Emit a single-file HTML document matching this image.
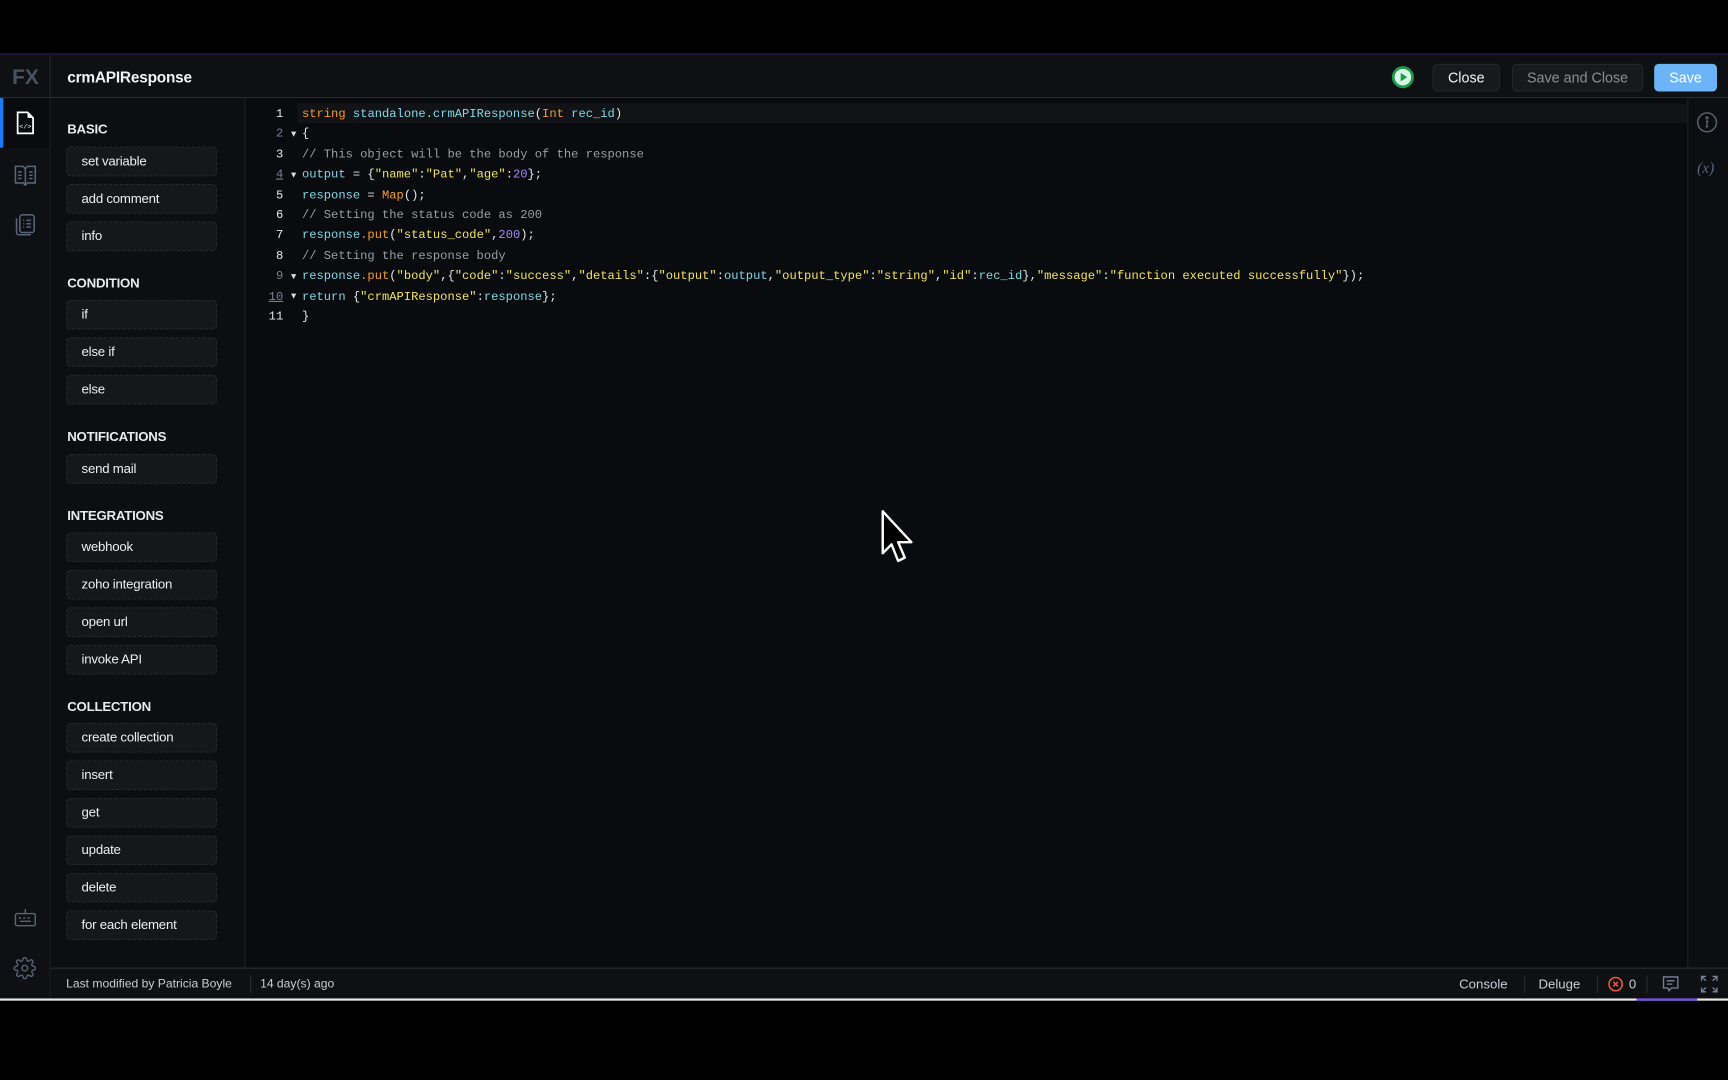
<!DOCTYPE html>
<html><head><meta charset="utf-8"><style>
html,body{margin:0;padding:0;background:#000;width:1728px;height:1080px;overflow:hidden}
#w{position:absolute;left:0;top:0;width:1568px;height:980px;transform:scale(1.10204);transform-origin:0 0;font-family:"Liberation Sans",sans-serif;background:#000}
.a{position:absolute}
.hdr{left:0;top:48px;width:1568px;height:41px;background:#0f1014;border-top:2px solid #1c0f3a;border-bottom:1px solid #2a2c32;box-sizing:border-box}
.rail{left:0;top:89px;width:45px;height:817px;background:#0f1014;border-right:1px solid #1e2026}
.pal{left:46px;top:89px;width:176px;height:789px;background:#0d0e12;border-right:1px solid #1e2026}
.ed{left:223px;top:89px;width:1308px;height:789px;background:#090b0e}
.rr{left:1531px;top:89px;width:37px;height:789px;background:#0d0e12;border-left:1px solid #1e2026}
.ft{left:46px;top:878px;width:1522px;height:28px;background:#0f1014;border-top:1px solid #2a2c32;box-sizing:border-box;font-size:11px;color:#c8ccd4}
.sec{left:61px;font-size:12px;color:#e8eaee;font-weight:bold;letter-spacing:-0.2px}
.it{left:60px;width:137px;height:27px;background:#15171b;border:1px dashed #25272d;border-radius:4px;box-sizing:border-box;font-size:12px;color:#eceef2;line-height:25px;padding-left:13px;letter-spacing:-0.2px}
.code{left:223px;top:95px;font-family:"Liberation Mono",monospace;font-size:11px;line-height:18.4px;white-space:pre;color:#e6e6e6}
.ln{position:absolute;left:0;width:34px;text-align:right;color:#e8e8e8;font-family:"Liberation Mono",monospace;font-size:11px}
.ln.d{color:#7a8190}
.tx{position:absolute;left:51px}
.ar{position:absolute;left:41px;font-size:8px;color:#ddd}
.k{color:#f59b2a}.i{color:#7fd8e6}.s{color:#f2e25a}.n{color:#a98bf5}.c{color:#9a9ea6}
.btn{top:58px;height:25px;border-radius:4px;font-size:13px;line-height:23px;text-align:center;box-sizing:border-box}
</style></head><body><div id="w">
<div class="a hdr"></div>
<div class="a" style="left:45px;top:50px;width:1px;height:39px;background:#24262c"></div>
<div class="a" style="left:11px;top:60px;font-size:19px;font-weight:bold;color:#4a5262">FX</div>
<div class="a" style="left:61px;top:62px;font-size:14px;font-weight:bold;color:#f2f2f2;letter-spacing:-0.2px">crmAPIResponse</div>
<svg class="a" style="left:1262px;top:59px" width="22" height="22" viewBox="0 0 22 22"><circle cx="11" cy="11" r="10" fill="#1a9c4a"/><circle cx="11" cy="11" r="7.5" fill="#d9f5e4"/><path d="M9 7.2 L15 11 L9 14.8Z" fill="#1a9c4a"/></svg>
<div class="a btn" style="left:1300px;width:61px;background:#17191d;border:1px solid #23252a;color:#f4f4f4">Close</div>
<div class="a btn" style="left:1372px;width:119px;background:#17191d;border:1px solid #23252a;color:#8a8e96">Save and Close</div>
<div class="a btn" style="left:1501px;width:57px;background:#6cb4f8;color:#fff;line-height:25px">Save</div>

<div class="a rail"></div>
<div class="a" style="left:0;top:89px;width:45px;height:45px;background:#090b0e"></div>
<div class="a" style="left:0;top:89px;width:3px;height:45px;background:#1a7cf0"></div>
<svg class="a" style="left:13px;top:101px" width="20" height="22" viewBox="0 0 20 22"><path d="M3 1h9l5 5v14H3z" fill="none" stroke="#fff" stroke-width="1.6"/><path d="M12 1v5h5" fill="#fff"/><text x="10" y="15.5" font-size="6" fill="#fff" text-anchor="middle" font-family="Liberation Mono">&lt;/&gt;</text></svg>
<svg class="a" style="left:12px;top:148px" width="22" height="22" viewBox="0 0 22 22" fill="none" stroke="#5a6478" stroke-width="1.4"><path d="M2 3h7l2 2 2-2h7v15h-7l-2 2-2-2H2z"/><path d="M11 5v15M4.5 8h3M4.5 11h3M4.5 14h3M14.5 8h3M14.5 11h3M14.5 14h3"/></svg>
<svg class="a" style="left:12px;top:193px" width="22" height="22" viewBox="0 0 22 22" fill="none" stroke="#5a6478" stroke-width="1.4"><rect x="6" y="2" width="13" height="16" rx="2"/><path d="M3 5v13a2 2 0 0 0 2 2h11"/><path d="M9 7h1M12 7h4M9 10h1M12 10h4M9 13h1M12 13h4"/></svg>
<svg class="a" style="left:13px;top:823px" width="20" height="20" viewBox="0 0 20 20" fill="none" stroke="#5a6478" stroke-width="1.3"><rect x="1" y="6" width="18" height="11" rx="1.5"/><path d="M4 10h2M8 10h2M12 10h2M5 13h10M10 6V2"/></svg>
<svg class="a" style="left:12px;top:868px" width="21" height="21" viewBox="0 0 24 24" fill="none" stroke="#5a6478" stroke-width="1.4"><circle cx="12" cy="12" r="3"/><path d="M19.4 15a1.7 1.7 0 0 0 .3 1.8l.1.1a2 2 0 1 1-2.8 2.8l-.1-.1a1.7 1.7 0 0 0-1.8-.3 1.7 1.7 0 0 0-1 1.5V21a2 2 0 1 1-4 0v-.1a1.7 1.7 0 0 0-1.100-1.5 1.7 1.7 0 0 0-1.8.3l-.1.1a2 2 0 1 1-2.8-2.8l.1-.1a1.7 1.7 0 0 0 .3-1.8 1.7 1.7 0 0 0-1.5-1H3a2 2 0 1 1 0-4h.1a1.7 1.7 0 0 0 1.5-1.1 1.7 1.7 0 0 0-.3-1.8l-.1-.1a2 2 0 1 1 2.8-2.8l.1.1a1.7 1.7 0 0 0 1.8.3H9a1.7 1.7 0 0 0 1-1.5V3a2 2 0 1 1 4 0v.1a1.7 1.7 0 0 0 1 1.5 1.7 1.7 0 0 0 1.8-.3l.1-.1a2 2 0 1 1 2.8 2.8l-.1.1a1.7 1.7 0 0 0-.3 1.8V9a1.7 1.7 0 0 0 1.5 1H21a2 2 0 1 1 0 4h-.1a1.7 1.7 0 0 0-1.5 1z"/></svg>

<div class="a pal"></div>
<div class="a sec" style="top:110px">BASIC</div>
<div class="a it" style="top:133px">set variable</div>
<div class="a it" style="top:167px">add comment</div>
<div class="a it" style="top:201px">info</div>
<div class="a sec" style="top:250px">CONDITION</div>
<div class="a it" style="top:272px">if</div>
<div class="a it" style="top:306px">else if</div>
<div class="a it" style="top:340px">else</div>
<div class="a sec" style="top:389px">NOTIFICATIONS</div>
<div class="a it" style="top:412px">send mail</div>
<div class="a sec" style="top:461px">INTEGRATIONS</div>
<div class="a it" style="top:483px">webhook</div>
<div class="a it" style="top:517px">zoho integration</div>
<div class="a it" style="top:551px">open url</div>
<div class="a it" style="top:585px">invoke API</div>
<div class="a sec" style="top:634px">COLLECTION</div>
<div class="a it" style="top:656px">create collection</div>
<div class="a it" style="top:690px">insert</div>
<div class="a it" style="top:724px">get</div>
<div class="a it" style="top:758px">update</div>
<div class="a it" style="top:792px">delete</div>
<div class="a it" style="top:826px">for each element</div>

<div class="a ed"></div>
<div class="a" style="left:270px;top:94px;width:1261px;height:18px;background:#111317"></div>
<div class="a code">
<div class="ln" style="top:0">1</div><div class="tx" style="top:0"><span class="k">string</span> <span class="i">standalone.crmAPIResponse</span>(<span class="k">Int</span> <span class="i">rec_id</span>)</div>
<div class="ln d" style="top:18.4px">2</div><div class="ar" style="top:19px">▼</div><div class="tx" style="top:18.4px">{</div>
<div class="ln" style="top:36.8px">3</div><div class="tx c" style="top:36.8px">// This object will be the body of the response</div>
<div class="ln d" style="top:55.2px;text-decoration:underline">4</div><div class="ar" style="top:56px">▼</div><div class="tx" style="top:55.2px"><span class="i">output</span> = {<span class="s">"name"</span>:<span class="s">"Pat"</span>,<span class="s">"age"</span>:<span class="n">20</span>};</div>
<div class="ln" style="top:73.6px">5</div><div class="tx" style="top:73.6px"><span class="i">response</span> = <span class="k">Map</span>();</div>
<div class="ln" style="top:92px">6</div><div class="tx c" style="top:92px">// Setting the status code as 200</div>
<div class="ln" style="top:110.4px">7</div><div class="tx" style="top:110.4px"><span class="i">response</span><span class="k">.put</span>(<span class="s">"status_code"</span>,<span class="n">200</span>);</div>
<div class="ln" style="top:128.8px">8</div><div class="tx c" style="top:128.8px">// Setting the response body</div>
<div class="ln d" style="top:147.2px">9</div><div class="ar" style="top:148px">▼</div><div class="tx" style="top:147.2px"><span class="i">response</span><span class="k">.put</span>(<span class="s">"body"</span>,{<span class="s">"code"</span>:<span class="s">"success"</span>,<span class="s">"details"</span>:{<span class="s">"output"</span>:<span class="i">output</span>,<span class="s">"output_type"</span>:<span class="s">"string"</span>,<span class="s">"id"</span>:<span class="i">rec_id</span>},<span class="s">"message"</span>:<span class="s">"function executed successfully"</span>});</div>
<div class="ln d" style="top:165.6px;text-decoration:underline">10</div><div class="ar" style="top:166px">▼</div><div class="tx" style="top:165.6px"><span class="i">return</span> {<span class="s">"crmAPIResponse"</span>:<span class="i">response</span>};</div>
<div class="ln" style="top:184px">11</div><div class="tx" style="top:184px">}</div>
</div>
<svg class="a" style="left:799px;top:462px" width="34" height="52" viewBox="0 0 34 52"><path d="M2 2 L2 40 L10 32 L16 47 L22 44 L16 30 L28 30 Z" fill="#000" stroke="#fff" stroke-width="2.2" stroke-linejoin="round"/></svg>

<div class="a rr"></div>
<svg class="a" style="left:1539px;top:101px" width="20" height="20" viewBox="0 0 20 20" fill="none" stroke="#5a6478" stroke-width="1.3"><circle cx="10" cy="10" r="8.5"/><circle cx="10" cy="6" r=".8" fill="#5a6478"/><path d="M9 9h1.5l-1 5h1.5"/></svg>
<div class="a" style="left:1540px;top:146px;font-family:'Liberation Serif',serif;font-style:italic;font-size:14px;color:#5a6478">(x)</div>

<div class="a ft">
<div class="a" style="left:14px;top:8px">Last modified by Patricia Boyle</div>
<div class="a" style="left:181px;top:6px;width:1px;height:16px;background:#2a2c32"></div>
<div class="a" style="left:190px;top:8px">14 day(s) ago</div>
<div class="a" style="left:1278px;top:7px;font-size:12px">Console</div>
<div class="a" style="left:1337px;top:6px;width:1px;height:16px;background:#2a2c32"></div>
<div class="a" style="left:1350px;top:7px;font-size:12px">Deluge</div>
<div class="a" style="left:1403px;top:6px;width:1px;height:16px;background:#2a2c32"></div>
<svg class="a" style="left:1413px;top:7px" width="14" height="14" viewBox="0 0 14 14" fill="none" stroke="#f0553a" stroke-width="1.4"><circle cx="7" cy="7" r="6"/><path d="M5 5l4 4M9 5l-4 4"/></svg>
<div class="a" style="left:1432px;top:7px;font-size:12px">0</div>
<div class="a" style="left:1448px;top:6px;width:1px;height:16px;background:#2a2c32"></div>
<svg class="a" style="left:1462px;top:6px" width="16" height="16" viewBox="0 0 16 16" fill="none" stroke="#7a8496" stroke-width="1.2"><path d="M1.5 1.5h13v10h-6l-2 2.5-1-2.5h-4z"/><path d="M4.5 5h7M4.5 8h5"/></svg>
<svg class="a" style="left:1497px;top:6px" width="16" height="16" viewBox="0 0 16 16" fill="none" stroke="#7a8496" stroke-width="1.2"><path d="M1 5V1h4M11 1h4v4M15 11v4h-4M5 15H1v-4M1 1l4 4M15 1l-4 4M15 15l-4-4M1 15l4-4"/></svg>
</div>
<div class="a" style="left:0;top:906px;width:1568px;height:2px;background:#e8e8e8"></div>
<div class="a" style="left:1485px;top:906px;width:55px;height:2px;background:#7a4cf0"></div>
</div></body></html>
